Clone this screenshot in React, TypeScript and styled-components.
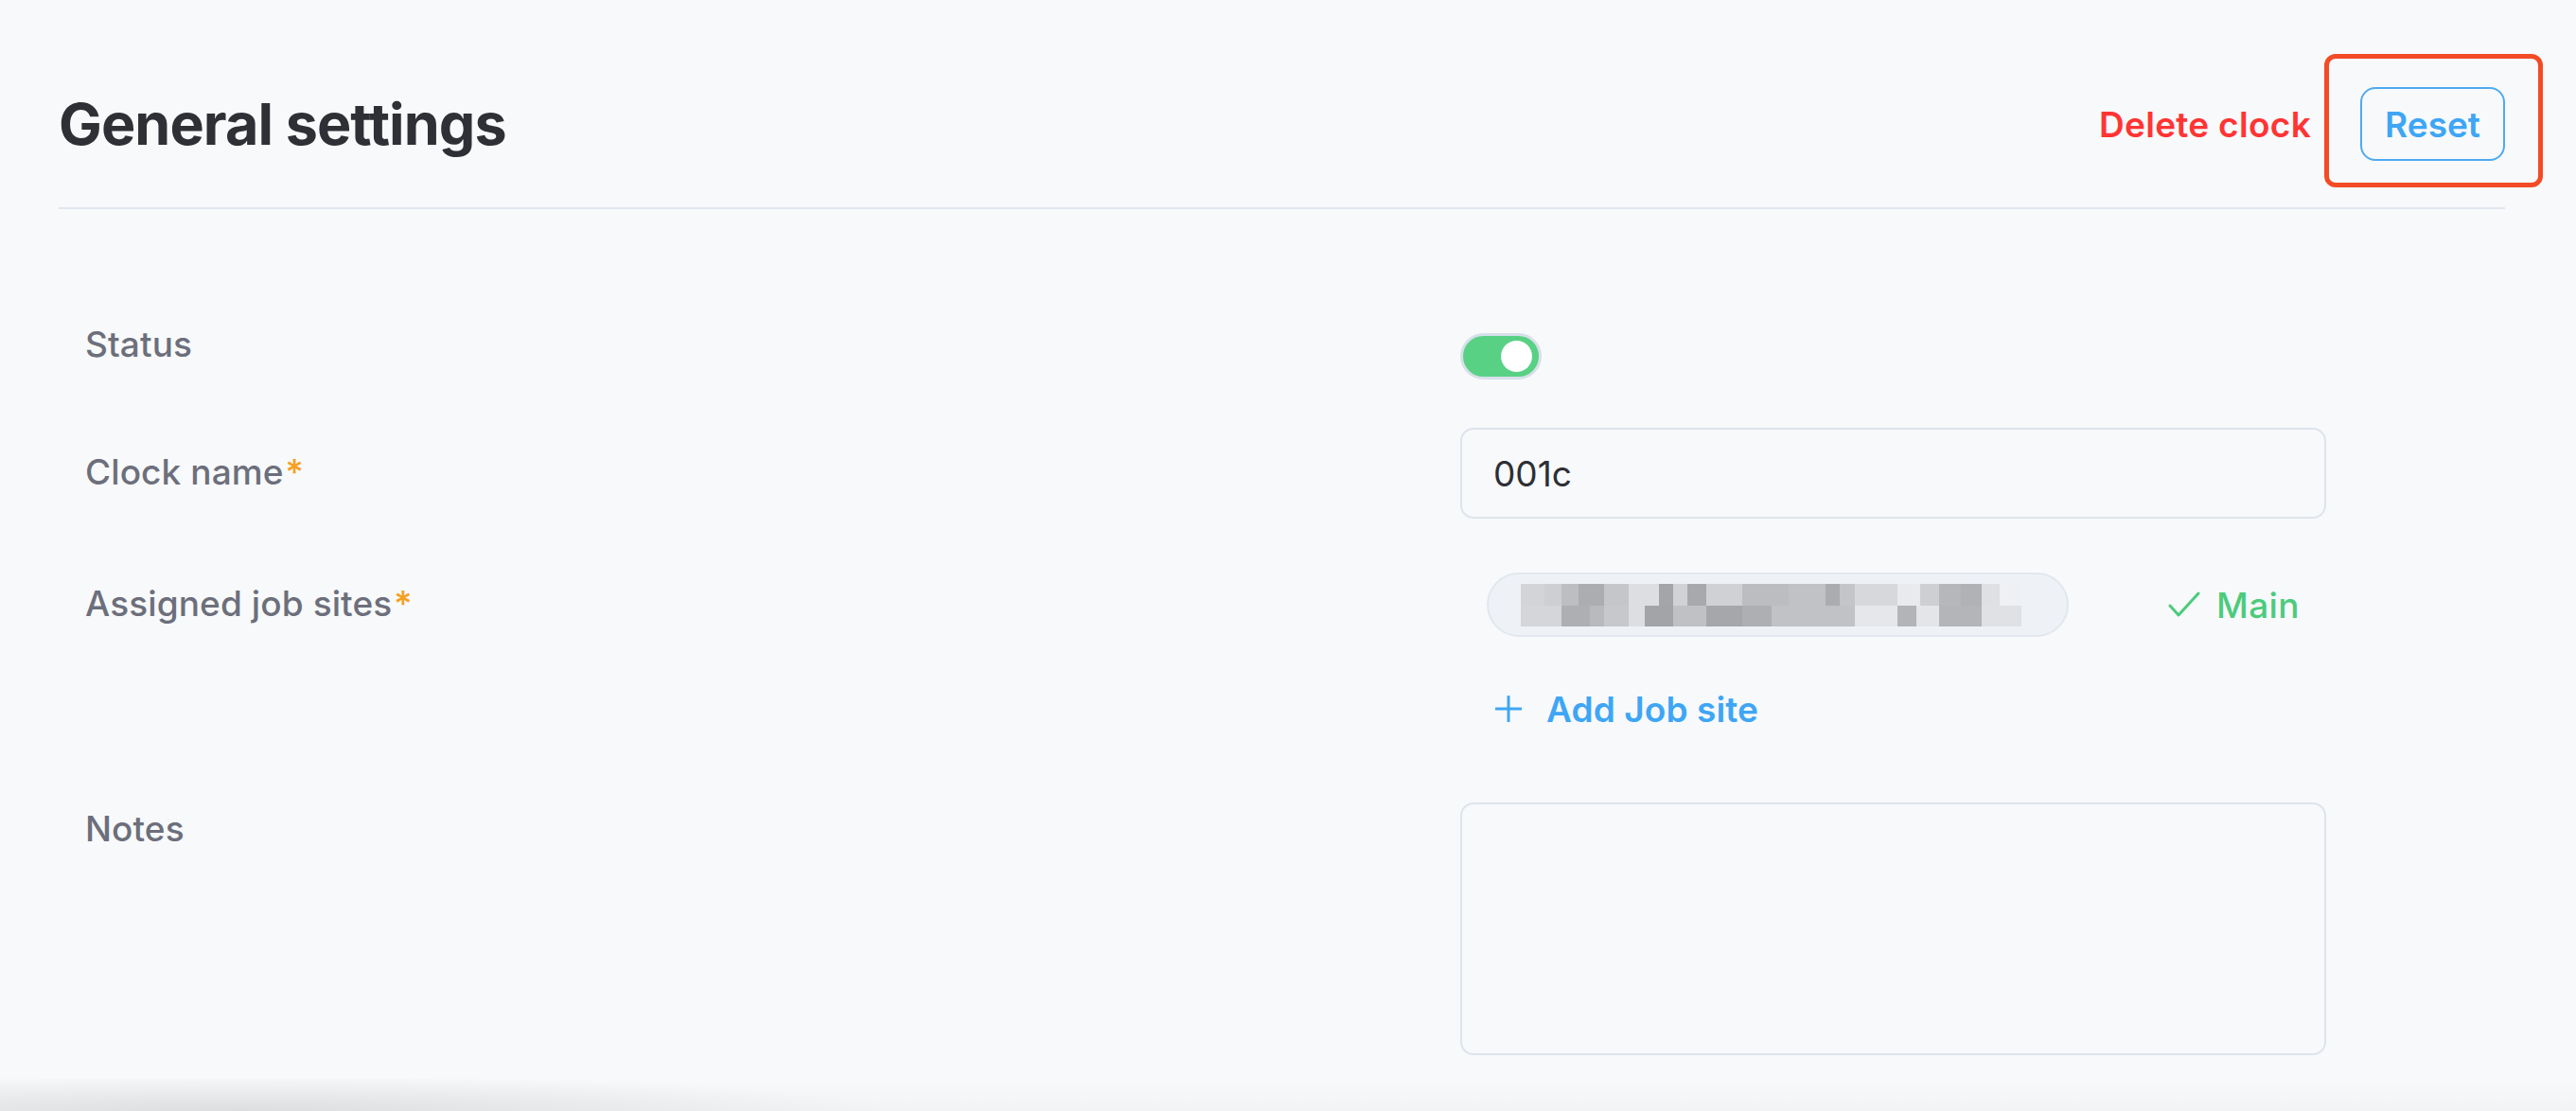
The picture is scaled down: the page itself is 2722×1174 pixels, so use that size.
import React from "react";
import styled, { createGlobalStyle } from "styled-components";

const Global = createGlobalStyle`
  html, body { margin: 0; padding: 0; }
  body {
    background: #f8f9fb;
    font-family: Inter, "Noto Sans", "Liberation Sans", sans-serif;
    -webkit-font-smoothing: antialiased;
  }
`;

const Page = styled.div`
  position: relative;
  width: 2722px;
  height: 1174px;
  overflow: hidden;
  background: #f8f9fb;
  box-sizing: border-box;
  padding: 92px 75px 0 62px;
`;

const Header = styled.div`
  display: flex;
  align-items: center;
  justify-content: space-between;
  height: 78px;
`;

const Title = styled.h1`
  margin: 0;
  font-size: 61px;
  font-weight: 700;
  letter-spacing: -0.9px;
  color: #2e3035;
`;

const Actions = styled.div`
  display: flex;
  align-items: center;
  gap: 52px;
`;

const DangerLink = styled.button`
  border: none;
  background: none;
  padding: 0;
  font-family: inherit;
  font-size: 37px;
  font-weight: 600;
  letter-spacing: 0.3px;
  color: #ff3434;
  cursor: pointer;
`;

const HighlightWrap = styled.div`
  position: relative;
`;

const Highlight = styled.div`
  position: absolute;
  top: -35px;
  left: -38px;
  right: -40px;
  bottom: -28px;
  border: 5px solid #f24b26;
  border-radius: 12px;
  pointer-events: none;
`;

const OutlineButton = styled.button`
  width: 153px;
  height: 78px;
  box-sizing: border-box;
  border: 2px solid #4eaaf2;
  border-radius: 16px;
  background: transparent;
  font-family: inherit;
  font-size: 37px;
  font-weight: 600;
  color: #3ea6f5;
  cursor: pointer;
`;

const Divider = styled.div`
  margin-top: 49px;
  height: 2px;
  background: #e1e6ee;
`;

const Form = styled.div`
  display: flex;
  flex-direction: column;
  padding-left: 28px;
`;

const Row = styled.div<{ $mt: number }>`
  display: flex;
  align-items: flex-start;
  margin-top: ${(p) => p.$mt}px;
`;

const Label = styled.div<{ $offset?: number }>`
  width: 1453px;
  flex: none;
  margin-top: ${(p) => p.$offset ?? 0}px;
  font-size: 37px;
  line-height: 48px;
  font-weight: 500;
  letter-spacing: 0.1px;
  color: #6c6f7b;
`;

const Required = styled.span`
  color: #f5a01f;
  margin-left: 2px;
`;

const Control = styled.div`
  width: 915px;
  flex: none;
`;

const Toggle = styled.div<{ $on: boolean }>`
  margin-top: 12px;
  width: 86px;
  height: 49px;
  box-sizing: border-box;
  border: 3px solid #d7e0ea;
  border-radius: 25px;
  background: ${(p) => (p.$on ? "#58d184" : "#cfd5dd")};
  display: flex;
  align-items: center;
  justify-content: ${(p) => (p.$on ? "flex-end" : "flex-start")};
  padding: 0 7px;
`;

const Knob = styled.div`
  width: 33px;
  height: 33px;
  border-radius: 50%;
  background: #ffffff;
`;

const Input = styled.div`
  height: 96px;
  box-sizing: border-box;
  border: 2px solid #dde4ed;
  border-radius: 14px;
  display: flex;
  align-items: center;
  padding-left: 33px;
  font-size: 37px;
  font-weight: 400;
  color: #2d2f35;
`;

const TextArea = styled.div`
  height: 267px;
  box-sizing: border-box;
  border: 2px solid #dde4ed;
  border-radius: 14px;
`;

const Sites = styled.div`
  padding-left: 28px;
  display: flex;
  flex-direction: column;
`;

const SiteLine = styled.div`
  display: flex;
  align-items: center;
`;

const Chip = styled.div`
  width: 615px;
  height: 68px;
  box-sizing: border-box;
  border: 2px solid #e2e7ef;
  border-radius: 34px;
  background: #eef2f7;
  display: flex;
  align-items: center;
  padding-left: 34px;
`;

const MainTag = styled.div`
  margin-left: 105px;
  display: flex;
  align-items: center;
  gap: 17px;
  font-size: 37px;
  font-weight: 500;
  letter-spacing: 0.4px;
  color: #4ccb7c;
`;

const AddLink = styled.button`
  margin-top: 54px;
  height: 44px;
  border: none;
  background: none;
  padding: 0 0 0 9px;
  display: flex;
  align-items: center;
  gap: 26px;
  font-family: inherit;
  font-size: 37px;
  font-weight: 600;
  letter-spacing: 0.1px;
  color: #3ea6f5;
  cursor: pointer;
`;

const BottomShade = styled.div`
  position: absolute;
  left: 0;
  right: 0;
  bottom: 0;
  height: 34px;
  background: radial-gradient(ellipse 700px 40px at 250px 100%, rgba(0, 0, 0, 0.09), rgba(0, 0, 0, 0) 100%),
    linear-gradient(to bottom, rgba(0, 0, 0, 0), rgba(0, 0, 0, 0.025));
  pointer-events: none;
`;

const top = [
  [25, "#d2d4d7"], [18, "#cdcfd2"], [18, "#bcbec1"], [27, "#abadb0"], [26, "#c4c6c9"],
  [32, "#dcdee1"], [15, "#a3a5a8"], [15, "#d0d2d5"], [20, "#a7a9ac"], [38, "#cfd1d4"],
  [49, "#bbbdc0"], [39, "#c0c2c5"], [15, "#aaacaf"], [16, "#c3c5c8"], [45, "#d6d8db"],
  [24, "#e8eaed"], [20, "#cdcfd2"], [23, "#b5b7ba"], [22, "#b0b2b5"], [19, "#dee0e3"],
  [23, "#eef0f3"],
] as const;
const bottom = [
  [43, "#d4d6d9"], [30, "#adafb2"], [15, "#b8babd"], [26, "#c6c8cb"], [17, "#dcdee1"],
  [30, "#a2a4a7"], [35, "#bfc1c4"], [38, "#a5a7aa"], [31, "#adafb2"], [88, "#c0c2c5"],
  [45, "#e5e7ea"], [20, "#b2b4b7"], [24, "#e3e5e8"], [45, "#b3b5b8"], [42, "#dfe1e4"],
] as const;

function Mosaic() {
  const rects: React.ReactNode[] = [];
  let x = 0;
  top.forEach(([w, c], i) => {
    rects.push(<rect key={"t" + i} x={x} y={0} width={w} height={23} fill={c} />);
    x += w;
  });
  x = 0;
  bottom.forEach(([w, c], i) => {
    rects.push(<rect key={"b" + i} x={x} y={23} width={w} height={22} fill={c} />);
    x += w;
  });
  return (
    <svg width="529" height="45" viewBox="0 0 529 45" shapeRendering="crispEdges">
      {rects}
    </svg>
  );
}

function Check() {
  return (
    <svg width="34" height="28" viewBox="0 0 34 28" fill="none">
      <path d="M2 15 L11 25 L32 2" stroke="#4ccb7c" strokeWidth="3" strokeLinecap="round" strokeLinejoin="round" />
    </svg>
  );
}

function Plus() {
  return (
    <svg width="28" height="28" viewBox="0 0 28 28" fill="none">
      <path d="M14 1 V27 M1 14 H27" stroke="#3ea6f5" strokeWidth="3" strokeLinecap="round" />
    </svg>
  );
}

export default function App() {
  return (
    <>
      <Global />
      <Page>
        <Header>
          <Title>General settings</Title>
          <Actions>
            <DangerLink>Delete clock</DangerLink>
            <HighlightWrap>
              <OutlineButton>Reset</OutlineButton>
              <Highlight />
            </HighlightWrap>
          </Actions>
        </Header>
        <Divider />
        <Form>
          <Row $mt={119}>
            <Label>Status</Label>
            <Control>
              <Toggle $on>
                <Knob />
              </Toggle>
            </Control>
          </Row>
          <Row $mt={51}>
            <Label $offset={23}>
              Clock name<Required>*</Required>
            </Label>
            <Control>
              <Input>001c</Input>
            </Control>
          </Row>
          <Row $mt={57}>
            <Label $offset={9}>
              Assigned job sites<Required>*</Required>
            </Label>
            <Control>
              <Sites>
                <SiteLine>
                  <Chip>
                    <Mosaic />
                  </Chip>
                  <MainTag>
                    <Check />
                    Main
                  </MainTag>
                </SiteLine>
                <AddLink>
                  <Plus />
                  Add Job site
                </AddLink>
              </Sites>
            </Control>
          </Row>
          <Row $mt={77}>
            <Label $offset={4}>Notes</Label>
            <Control>
              <TextArea />
            </Control>
          </Row>
        </Form>
        <BottomShade />
      </Page>
    </>
  );
}
